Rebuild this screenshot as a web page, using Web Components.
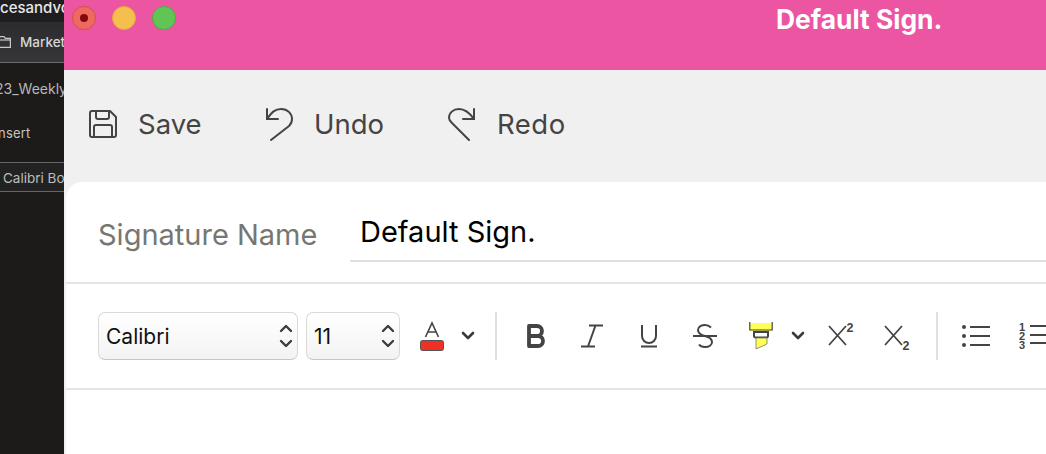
<!DOCTYPE html>
<html><head><meta charset="utf-8"><title>Default Sign.</title>
<style>
html,body{margin:0;padding:0;height:454px;width:1046px;overflow:hidden;background:#1b1b1b;font-family:Inter,"Liberation Sans",sans-serif}
#app{display:flex;width:1046px;height:454px;overflow:hidden}
svg{display:block}
</style></head><body>
<div id="app">
<side-strip></side-strip>
<sig-window>
  <action-btn slot="actions" label="Save" style="width:176px;gap:20px"><svg width="30" height="30" viewBox="0 0 30 30" fill="none" stroke="#444" stroke-width="2"><path d="M5 2h17l6 6v18a2 2 0 0 1-2 2H4a2 2 0 0 1-2-2V4a2 2 0 0 1 2-2z" stroke-linejoin="round"/><path d="M8 2v6a2 2 0 0 0 2 2h9a2 2 0 0 0 2-2V2"/><path d="M6 28V18a2 2 0 0 1 2-2h14a2 2 0 0 1 2 2v10"/></svg></action-btn>
  <action-btn slot="actions" label="Undo" style="width:182px;gap:20px"><svg width="30" height="34" viewBox="-1 0 30 34" fill="none" stroke="#444" stroke-width="2" stroke-linecap="round"><path d="M2 2v10h11"/><path d="M2 12C7 5 10 2 16 2c7 0 11 5 11 10 0 3-1 5-3 7L6 33"/></svg></action-btn>
  <action-btn slot="actions" label="Redo" style="gap:21px;letter-spacing:.5px"><svg width="30" height="34" viewBox="-1 0 30 34" fill="none" stroke="#444" stroke-width="2" stroke-linecap="round"><path d="M27 2v10H16"/><path d="M27 12C22 5 18 2 12 2 6 2 2 6 2 11c0 2 1 3 3 5l17 17"/></svg></action-btn>
  <format-bar slot="toolbar"></format-bar>
</sig-window>
</div>
<script>
function def(name,html){
  customElements.define(name,class extends HTMLElement{
    constructor(){super();const r=this.attachShadow({mode:'open'});r.innerHTML=typeof html==='function'?html(this):html;}
  });
}
def('side-strip',`<style>
:host{display:flex;flex-direction:column;width:64px;flex:none;height:454px;background:#1c1b1a;overflow:hidden;font:13px Inter,"Liberation Sans",sans-serif;color:#c6c6c6;white-space:nowrap}
.t{height:22px;background:#1e1e20;color:#e8e8e8;font-size:15px;line-height:15px;font-weight:500}
.f{height:41px;box-sizing:border-box;background:linear-gradient(#2c2c2e,#363638);border-bottom:1px solid #6a6a6a;display:flex;align-items:center;gap:9px;font-size:13.5px;color:#d6d6d6;font-weight:500;padding-bottom:1px}
.f svg{flex:none}
.w{height:50px;box-sizing:border-box;padding-top:16px;font-size:14px;color:#b8b8b8;line-height:20px;margin-left:-5px}
.i{height:50px;box-sizing:border-box;padding-top:10px;line-height:20px;letter-spacing:.2px;margin-left:-2px;border-bottom:1px solid #666}
.c{height:29px;box-sizing:border-box;padding:5px 0 0 3px;line-height:20px;font-size:13.5px;border-bottom:1px solid #666;background:#232222;color:#bdbdbd}
</style><div class="t">cesandvo</div><div class="f"><svg width="11" height="13" viewBox="0 0 11 13" fill="none" stroke="#c8c8c8" stroke-width="1.2" style="display:block"><path d="M-2 1.600h6l1.300 1.700h5.100v9H-2z"/><path d="M-2 5h13"/></svg>Marketi</div><div class="w">23_Weekly</div><div class="i">nsert</div><div class="c">Calibri Bo</div>`);

def('sig-window',`<style>
:host{display:flex;flex-direction:column;flex:1;min-width:0;height:454px;background:#f0f0f0;overflow:hidden;font-family:Inter,"Liberation Sans",sans-serif}
.bar{height:70px;flex:none;background:#ec55a2;display:flex;padding-top:6px;box-sizing:border-box;position:relative}
.lights{display:flex;gap:16px;margin-left:8px;height:24px}
.l{width:24px;height:24px;border-radius:50%;box-sizing:border-box;display:flex;align-items:center;justify-content:center}
.r{background:#ee695f;border:1px solid #d8504a}.y{background:#f5bf4f;border:1px solid #e0a63c}.g{background:#61c555;border:1px solid #52a945}
.r i{width:8px;height:8px;border-radius:50%;background:#7f0c08}
.title{position:absolute;left:712px;top:4px;color:#fff;font-size:26.400px;font-weight:700;line-height:30px;white-space:nowrap}
.acts{height:112px;flex:none;display:flex;align-items:center;padding:0 0 5px 24px;box-sizing:border-box}
.card{flex:1;background:#fff;margin-left:2px;border-radius:16px 0 0 0;display:flex;flex-direction:column;min-height:0}
.name{height:102px;flex:none;display:flex;box-sizing:border-box;border-bottom:2px solid #e4e4e4;padding-left:32px}
.lab{width:252px;flex:none;color:#777772;font-size:29px;line-height:32px;padding-top:37px;box-sizing:border-box;white-space:nowrap}
.val{flex:1;height:80px;box-sizing:border-box;border-bottom:2px solid #dfdfdf;color:#000;font-size:29px;line-height:32px;padding:34px 0 0 10px;white-space:nowrap}
.rest{flex:1;background:#fff}
</style>
<div class="bar"><div class="lights"><span class="l r"><i></i></span><span class="l y"></span><span class="l g"></span></div><div class="title">Default Sign.</div></div>
<div class="acts"><slot name="actions"></slot></div>
<div class="card"><div class="name"><div class="lab">Signature Name</div><div class="val">Default Sign.</div></div><slot name="toolbar"></slot><div class="rest"></div></div>`);

def('action-btn',el=>`<style>
:host{display:flex;align-items:center;flex:none;gap:21px;color:#444;font-size:27.500px;line-height:32px;font-family:Inter,"Liberation Sans",sans-serif}
</style><slot></slot><span>${el.getAttribute('label')||''}</span>`);

def('format-select',el=>`<style>
:host{display:flex;align-items:center;justify-content:space-between;box-sizing:border-box;height:48px;flex:none;border:1px solid #d9d9d9;border-bottom-color:#c6c6c6;border-radius:7px;background:linear-gradient(#fff,#f3f3f3);padding:0 4px 0 7px;color:#111;font:21px Inter,"Liberation Sans",sans-serif}
</style><span>${el.getAttribute('value')}</span><svg width="14" height="30" viewBox="0 0 14 30" fill="none" stroke="#3c3c3c" stroke-width="2.400" stroke-linecap="round" stroke-linejoin="round" style="display:block"><path d="M2 10l5-5 5 5M2 20l5 5 5-5"/></svg>`);

def('format-bar',`<style>
:host{display:flex;align-items:center;box-sizing:border-box;height:106px;flex:none;padding-left:32px;border-bottom:2px solid #e4e4e4;overflow:hidden;white-space:nowrap}
svg{display:block;flex:none}
.sep{width:2px;height:48px;background:#e0e0e0;flex:none}
</style>
<format-select value="Calibri" style="width:200px"></format-select>
<format-select value="11" style="width:94px;margin-left:8px"></format-select>
<svg style="margin-left:20px" width="24" height="30" viewBox="0 0 24 30"><path d="M5.500 16L12 2l6.500 14M7.800 11h8.400" fill="none" stroke="#444" stroke-width="1.600"/><rect x=".5" y="19.500" width="23" height="10" rx="2" fill="#ee3124" stroke="#555"/></svg>
<svg style="margin-left:17px" width="14" height="10" viewBox="0 0 14 10" fill="none" stroke="#3a3a3a" stroke-width="2.600" stroke-linecap="round" stroke-linejoin="round"><path d="M2 2l5 5 5-5"/></svg>
<span class="sep" style="margin-left:20px"></span>
<svg style="margin-left:30px" width="18" height="24" viewBox="0 0 18 24" fill="none" stroke="#444" stroke-width="3.800" stroke-linejoin="round"><path d="M2 2h8a5 5 0 0 1 0 10H2zM2 12h9a5 5 0 0 1 0 10H2z"/></svg>
<svg style="margin-left:36px" width="22" height="24" viewBox="0 0 22 24" fill="none" stroke="#444" stroke-width="2"><path d="M8 1.500h14M0 22.500h14M14.500 1.500L7 22.500"/></svg>
<svg style="margin-left:38px" width="16" height="24" viewBox="0 0 16 24" fill="none" stroke="#444" stroke-width="2"><path d="M1 1v11a7 7 0 0 0 14 0V1M0 22.500h16"/></svg>
<svg style="margin-left:36px" width="24" height="24" viewBox="0 0 24 24" fill="none" stroke="#444" stroke-width="2"><path d="M0 12h24M18 3.500C16 1.500 14 1 12 1 9 1 5 2.500 5 6c0 3 3 5 7 6 4 1 7 3 7 6 0 3-3 5-7 5-3 0-5-1-6-2.500"/></svg>
<svg style="margin-left:32px" width="24" height="28" viewBox="0 0 24 28"><rect x="1" y="1" width="22" height="8" fill="#ffff55"/><path d="M.8 0v8h22.400V0" fill="none" stroke="#444" stroke-width="1.200"/><path d="M5 10h14v4a1.500 1.500 0 0 1-1.500 1.500h-11A1.500 1.500 0 0 1 5 14z" fill="#fff" stroke="#444" stroke-width="2"/><path d="M7 16h11v6l-11 5z" fill="#ffff55" stroke="#777" stroke-width=".8"/></svg>
<svg style="margin-left:18px" width="14" height="10" viewBox="0 0 14 10" fill="none" stroke="#3a3a3a" stroke-width="2.600" stroke-linecap="round" stroke-linejoin="round"><path d="M2 2l5 5 5-5"/></svg>
<svg style="margin-left:23px" width="26" height="28" viewBox="0 0 26 28" fill="none" stroke="#444" stroke-width="1.800"><path d="M1 4l17 19M18 4L1 23"/><text x="18.500" y="10" font-family="Liberation Sans" font-weight="700" font-size="12.500" fill="#444" stroke="none">2</text></svg>
<svg style="margin-left:30px" width="26" height="28" viewBox="0 0 26 28" fill="none" stroke="#444" stroke-width="1.800"><path d="M1 4l17 19M18 4L1 23"/><text x="18.500" y="28" font-family="Liberation Sans" font-weight="700" font-size="12.500" fill="#444" stroke="none">2</text></svg>
<span class="sep" style="margin-left:26px"></span>
<svg style="margin-left:24px" width="28" height="24" viewBox="0 0 28 24" fill="#444"><circle cx="2" cy="3" r="2"/><circle cx="2" cy="12" r="2"/><circle cx="2" cy="21" r="2"/><path d="M8 2h20v2H8zM8 11h20v2H8zM8 20h20v2H8z"/></svg>
<svg style="margin-left:29px" width="40" height="28" viewBox="0 0 40 28" fill="#444"><text x="0" y="9" font-family="Liberation Sans" font-weight="700" font-size="11">1</text><text x="0" y="18" font-family="Liberation Sans" font-weight="700" font-size="11">2</text><text x="0" y="27" font-family="Liberation Sans" font-weight="700" font-size="11">3</text><path d="M11 3h19v2H11zM11 12h19v2H11zM11 20h19v2H11z"/></svg>`);
</script>
</body></html>
